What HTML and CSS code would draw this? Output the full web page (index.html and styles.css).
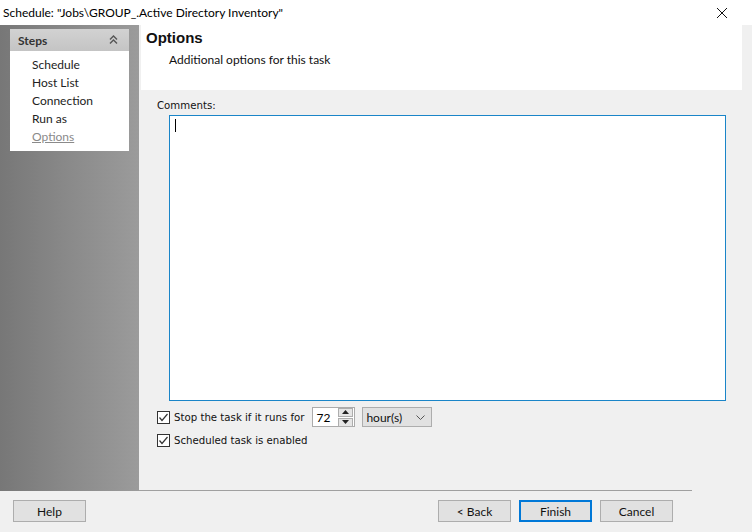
FILE: index.html
```html
<!DOCTYPE html>
<html lang="en">
<head>
  <meta charset="UTF-8" />
  <title>Schedule</title>
  <link rel="stylesheet" href="styles.css">
</head>
<body>
  <div class="titlebar">
    <span class="title">Schedule: "Jobs\GROUP_.Active Directory Inventory"</span>
    <svg class="close" width="12" height="12" viewBox="0 0 12 12"><path d="M1 1L11 11M11 1L1 11" stroke="#111" stroke-width="1"/></svg>
  </div>

  <div class="main">
    <div class="sidebar">
      <div class="steps">
        <div class="steps-head">
          <span>Steps</span>
          <svg width="9" height="10" viewBox="0 0 9 10"><path d="M1 4.5L4.5 1L8 4.5M1 8.5L4.5 5L8 8.5" fill="none" stroke="#555" stroke-width="1.4"/></svg>
        </div>
        <ul class="steps-list">
          <li>Schedule</li>
          <li>Host List</li>
          <li>Connection</li>
          <li>Run as</li>
          <li class="current">Options</li>
        </ul>
      </div>
    </div>

    <div class="content">
      <div class="page-head">
        <h1>Options</h1>
        <p>Additional options for this task</p>
      </div>

      <div class="page-body">
        <div class="label">Comments:</div>
        <div class="comments"><span class="caret"></span></div>

        <div class="opt-row">
          <span class="check"><svg width="13" height="13" viewBox="0 0 13 13"><path d="M2.5 6.5L5 9.5L10.5 3" fill="none" stroke="#333" stroke-width="1.2"/></svg></span>
          <span class="opt-text">Stop the task if it runs for</span>
          <div class="spin">
            <span class="spin-val">72</span>
            <div class="spin-btns">
              <span class="spin-btn"><svg width="7" height="4" viewBox="0 0 7 4"><path d="M0 4L3.5 0L7 4Z" fill="#222"/></svg></span>
              <span class="spin-btn"><svg width="7" height="4" viewBox="0 0 7 4"><path d="M0 0L3.5 4L7 0Z" fill="#222"/></svg></span>
            </div>
          </div>
          <div class="combo">
            <span>hour(s)</span>
            <svg width="9" height="5" viewBox="0 0 9 5"><path d="M0.5 0.5L4.5 4.5L8.5 0.5" fill="none" stroke="#555" stroke-width="1"/></svg>
          </div>
        </div>

        <div class="opt-row">
          <span class="check"><svg width="13" height="13" viewBox="0 0 13 13"><path d="M2.5 6.5L5 9.5L10.5 3" fill="none" stroke="#333" stroke-width="1.2"/></svg></span>
          <span class="opt-text">Scheduled task is enabled</span>
        </div>
      </div>

      <div class="separator"></div>
    </div>
  </div>

  <div class="footer">
    <button class="btn">Help</button>
    <div class="nav-btns">
      <button class="btn">&lt; Back</button>
      <button class="btn default">Finish</button>
      <button class="btn">Cancel</button>
    </div>
  </div>
</body>
</html>
```

FILE: styles.css
```css
body {
  margin: 0;
  width: 752px;
  height: 532px;
  overflow: hidden;
  background-color: #f0f0f0;
  font-family: Lato, 'Liberation Sans', sans-serif;
  font-size: 12px;
  color: #000;
}

.titlebar {
  height: 25px;
  background: #fff;
  display: flex;
  align-items: center;
  justify-content: space-between;
  padding: 0 24px 0 3px;
}

.title {
  font-size: 12px;
}

.close {
  display: block;
}

.main {
  display: flex;
  height: 466px;
}

.sidebar {
  width: 119px;
  padding: 4px 10px 0;
  background: linear-gradient(to right, #777 0%, #888 45%, #9b9b9b 100%);
}

.steps {
  background: #fff;
}

.steps-head {
  height: 22px;
  background: linear-gradient(to bottom, #d2d2d2, #c4c4c4);
  display: flex;
  align-items: center;
  justify-content: space-between;
  padding: 0 11px 0 8px;
  font-weight: bold;
  color: #333;
}

.steps-list {
  list-style: none;
  margin: 0;
  padding: 5px 0 5px 22px;
}

.steps-list li {
  height: 18px;
  line-height: 18px;
  color: #222;
}

.steps-list .current {
  color: #8a8a8a;
  text-decoration: underline;
}

.content {
  flex: 1;
  display: flex;
  flex-direction: column;
}

.page-head {
  height: 65px;
  background: #fff;
  margin: 0 10px 0 2px;
  padding: 0 0 0 5px;
}

.page-head h1 {
  margin: 0;
  padding-top: 4px;
  font-family: 'Liberation Sans', Arial, sans-serif;
  font-size: 15px;
  line-height: 18px;
  font-weight: bold;
  color: #111;
}

.page-head p {
  margin: 5px 0 0 23px;
  color: #111;
}

.page-body {
  flex: 1;
  padding: 9px 0 0 18px;
}

.label {
  font-family: 'DejaVu Sans', Tahoma, sans-serif;
  font-size: 10.2px;
  line-height: 14px;
  color: #111;
}

.comments {
  height: 284px;
  width: 555px;
  margin: 2px 0 0 12px;
  background: #fff;
  border: 1px solid #1a85c8;
  position: relative;
}

.caret {
  position: absolute;
  left: 5px;
  top: 3px;
  width: 1px;
  height: 13px;
  background: #000;
}

.opt-row {
  display: flex;
  align-items: center;
  height: 20px;
  margin-top: 6px;
}

.opt-row + .opt-row {
  margin-top: 3px;
}

.check {
  width: 13px;
  height: 13px;
  box-sizing: border-box;
  border: 1px solid #333;
  background: #fff;
  display: flex;
}

.check svg {
  margin: -1px;
}

.opt-text {
  font-family: 'DejaVu Sans', Tahoma, sans-serif;
  font-size: 10.2px;
  margin-left: 4px;
  color: #111;
}

.spin {
  margin-left: 8px;
  width: 43px;
  height: 20px;
  box-sizing: border-box;
  border: 1px solid #ababab;
  background: #fff;
  display: flex;
  align-items: center;
  justify-content: space-between;
}

.spin-val {
  padding-left: 3px;
}

.spin-btns {
  display: flex;
  flex-direction: column;
  gap: 1px;
  margin-right: 1px;
}

.spin-btn {
  width: 13px;
  height: 7px;
  background: #e5e5e5;
  border: 1px solid #adadad;
  display: flex;
  align-items: center;
  justify-content: center;
}

.combo {
  margin-left: 7px;
  width: 70px;
  height: 20px;
  box-sizing: border-box;
  border: 1px solid #adadad;
  background: #e1e1e1;
  display: flex;
  align-items: center;
  justify-content: space-between;
  padding: 0 6px 0 3px;
  color: #111;
}

.separator {
  height: 1px;
  background: #a0a0a0;
  margin-right: 60px;
}

.footer {
  height: 41px;
  display: flex;
  align-items: center;
  justify-content: space-between;
  padding: 0 79px 0 13px;
}

.nav-btns {
  display: flex;
  gap: 8px;
}

.btn {
  width: 73px;
  height: 22px;
  background: #e1e1e1;
  border: 1px solid #adadad;
  font-family: Lato, 'Liberation Sans', sans-serif;
  font-size: 12px;
  color: #111;
  padding: 0;
  margin-top: -1px;
}

.btn.default {
  border: 2px solid #0078d7;
}
```
